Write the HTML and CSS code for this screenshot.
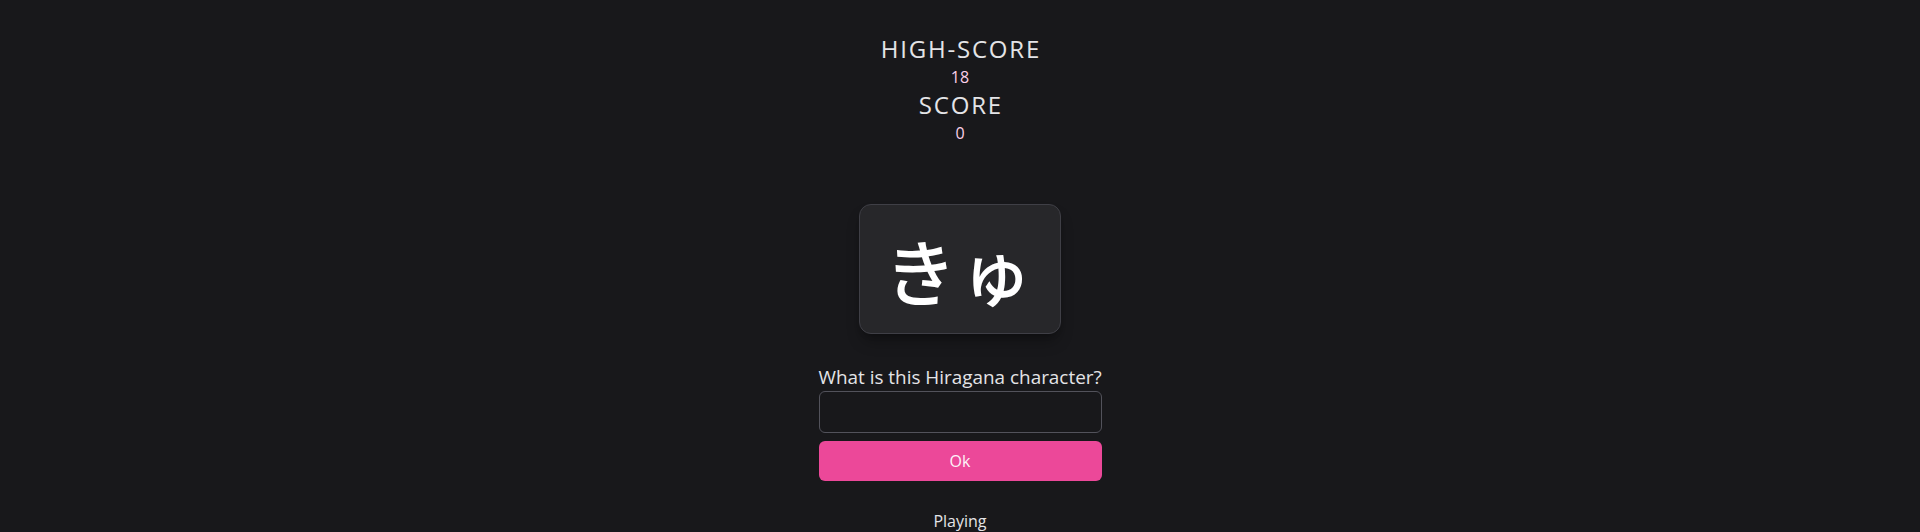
FILE: index.html
```html
<!DOCTYPE html>
<html lang="en">
<head>
<meta charset="utf-8">
<title>Hiragana Quiz</title>
<link rel="stylesheet" href="styles.css">
</head>
<body>
<main class="app">
  <header class="scores">
    <h2 class="score-title">HIGH-SCORE</h2>
    <p class="score-value">18</p>
    <h2 class="score-title">SCORE</h2>
    <p class="score-value">0</p>
  </header>
  <section class="card">
    <span class="kana" lang="ja">きゅ</span>
  </section>
  <form class="answer">
    <label class="answer-label" for="answer">What is this Hiragana character?</label>
    <input class="answer-input" id="answer" type="text" autocomplete="off">
    <button class="answer-button" type="button">Ok</button>
  </form>
  <p class="status">Playing</p>
</main>
</body>
</html>
```
FILE: styles.css
```css
* { box-sizing: border-box; }
html, body {
  margin: 0;
  padding: 0;
  background: #18181b;
  height: 100%;
}
body {
  font-family: "Open Sans", "Noto Sans", "Liberation Sans", sans-serif;
  color: #e4e4e7;
}
.app {
  display: flex;
  flex-direction: column;
  align-items: center;
  padding-top: 33px;
}
.scores {
  display: flex;
  flex-direction: column;
  align-items: center;
}
.score-title {
  margin: 0;
  font-size: 24px;
  line-height: 32px;
  font-weight: 400;
  letter-spacing: 1.8px;
  padding-left: 1.8px;
  color: #e4e4e7;
}
.score-value {
  margin: 0;
  font-size: 16px;
  line-height: 24px;
  color: #fbcfe8;
}
.card {
  margin-top: 59px;
  padding: 28px 24px;
  background: #27272a;
  border: 1px solid #3f3f46;
  border-radius: 12px;
  box-shadow: 0 10px 15px -3px rgba(0,0,0,0.3), 0 4px 6px -4px rgba(0,0,0,0.3);
}
.kana {
  display: block;
  font-family: "Noto Sans CJK JP", sans-serif;
  font-weight: 500;
  font-size: 72px;
  line-height: 72px;
  letter-spacing: 0.05em;
  color: #ffffff;
}
.answer {
  margin-top: 29px;
  display: flex;
  flex-direction: column;
  width: 283px;
}
.answer-label {
  font-size: 18.9px;
  line-height: 28px;
  white-space: nowrap;
  color: #e4e4e7;
}
.answer-input {
  height: 42px;
  margin: 0;
  background: #18181b;
  border: 1px solid #52525b;
  border-radius: 6px;
  color: #e4e4e7;
  font: inherit;
  padding: 0 12px;
}
.answer-button {
  margin-top: 8px;
  height: 40px;
  border: none;
  border-radius: 6px;
  background: #ec4899;
  color: #fdf2f8;
  font-family: inherit;
  font-size: 16px;
}
.status {
  margin: 28px 0 0;
  font-size: 16px;
  line-height: 24px;
  color: #e4e4e7;
}
```
